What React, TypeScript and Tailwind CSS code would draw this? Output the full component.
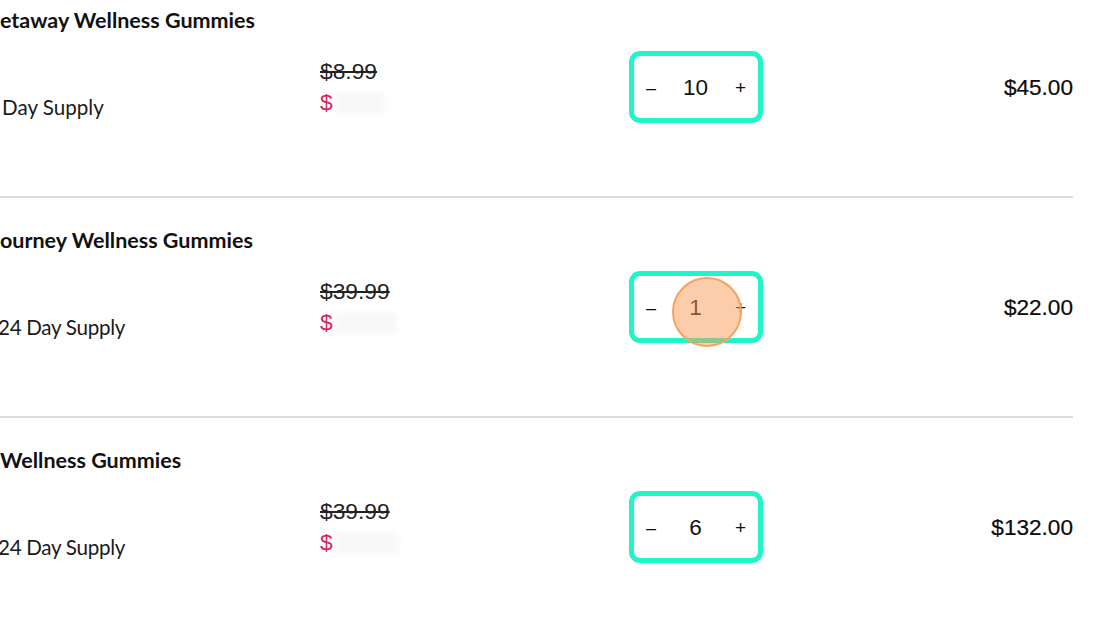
import React from "react"

type Item = {
    title: string
    supply: string
    supplyOffset: string
    oldPrice: string
    redactWidth: string
    qty: number
    total: string
    tapped?: boolean
}

const items: Item[] = [
    { title: "etaway Wellness Gummies", supply: "Day Supply", supplyOffset: "ml-[2px]", oldPrice: "$8.99", redactWidth: "w-[50px]", qty: 10, total: "$45.00" },
    { title: "ourney Wellness Gummies", supply: "24 Day Supply", supplyOffset: "-ml-[2px] tracking-[-0.3px]", oldPrice: "$39.99", redactWidth: "w-[62px]", qty: 1, total: "$22.00", tapped: true },
    { title: "Wellness Gummies", supply: "24 Day Supply", supplyOffset: "-ml-[2px] tracking-[-0.3px]", oldPrice: "$39.99", redactWidth: "w-[64px]", qty: 6, total: "$132.00" },
]

const CartRow = ({ item }: { item: Item }) => (
    <div className="h-[220px] border-b-2 border-[#dcdcdc]">
        {/* Product name */}
        <div className="pt-[28px] h-[56px]">
            <h3 className="text-[21.5px] leading-[28px] font-bold text-[#111] font-['Lato',sans-serif] whitespace-nowrap">
                {item.title}
            </h3>
        </div>

        <div className="flex items-start">
            <div className="w-[320px] pt-[59px]">
                <p className={`${item.supplyOffset} text-[20.6px] leading-[28px] text-[#1a1a1a] font-['Lato',sans-serif] whitespace-nowrap`}>
                    {item.supply}
                </p>
            </div>

            {/* Prices */}
            <div className="w-[309px] pt-[22px] font-['Liberation_Sans',sans-serif] text-[22.8px] leading-[31px]">
                <div className="line-through text-[#222] decoration-[1.5px]">{item.oldPrice}</div>
                <div className="flex items-center">
                    <span className="text-[#d3255c]">$</span>
                    <span className={`ml-[2px] h-[22px] ${item.redactWidth} bg-[#f8f8f8] rounded-sm blur-[2px]`}></span>
                </div>
            </div>

            {/* Quantity */}
            <div className="pt-[17px]">
                <div className="relative w-[134px] h-[72px] border-[5px] border-[#1ff5c6] rounded-[11px] flex items-center justify-between px-[12px] pt-[2px] font-['Liberation_Sans',sans-serif] text-[#111]">
                    <span className="text-[18px]">–</span>
                    <span className="text-[22.5px]">{item.qty}</span>
                    <span className="text-[19px]">+</span>
                    {item.tapped && (
                        <div className="absolute left-[38px] top-[1px] w-[70px] h-[70px] rounded-full bg-[#fb9a55]/50 border-2 border-[#f6a262]"></div>
                    )}
                </div>
            </div>

            <div className="flex-1 pt-[40px] text-right font-['Liberation_Sans',sans-serif] text-[22.6px] leading-[28px] text-[#0a0a0a] [-webkit-text-stroke:0.2px_#0a0a0a]">
                {item.total}
            </div>
        </div>
    </div>
)

export default function App() {
    return (
        <div className="w-[1120px] h-[626px] overflow-hidden bg-white">
            <div className="w-[1073px] -mt-[22px]">
                {items.map((item, i) => (
                    <CartRow key={`row-${i}`} item={item} />
                ))}
            </div>
        </div>
    )
}
